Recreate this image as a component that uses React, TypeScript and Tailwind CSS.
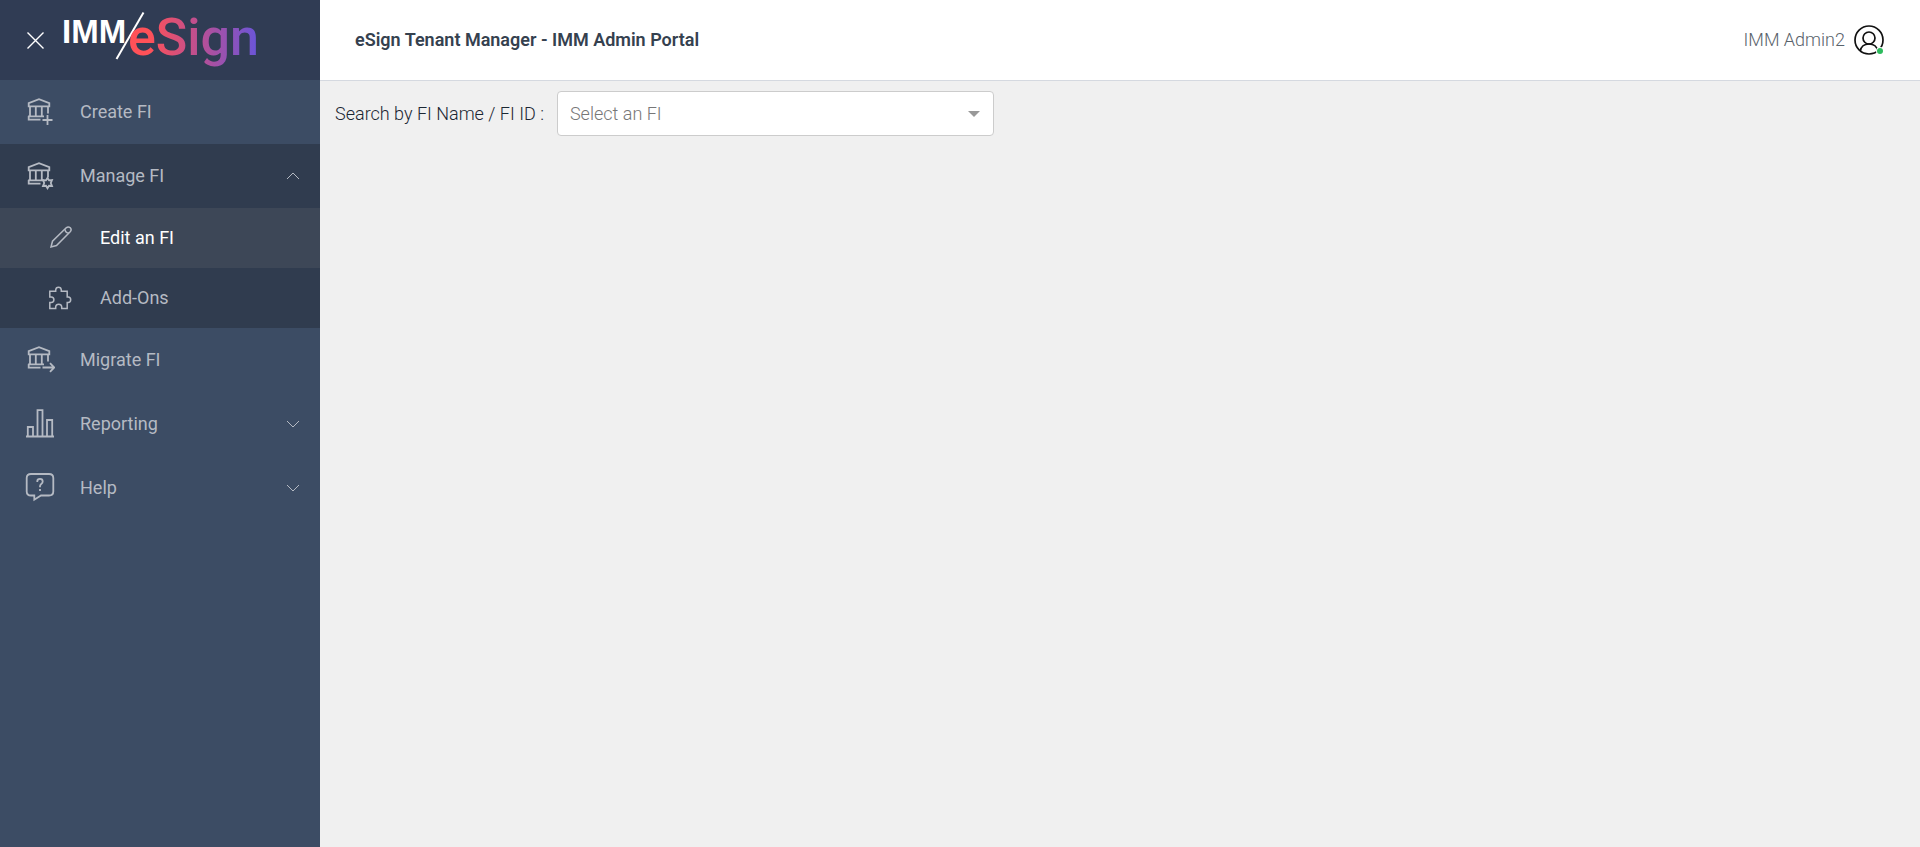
import type { ReactNode } from 'react';

const stroke = {
  fill: 'none',
  stroke: 'currentColor',
  strokeWidth: 1.8,
} as const;

function Bank({ children }: { children: ReactNode }) {
  return (
    <svg width="30" height="30" viewBox="0 0 30 30" {...stroke} aria-hidden="true">
      <path d="M3.7 9.3V6.2L14 2.2L24.3 6.2V9.3Z" />
      <path d="M5 10V19M10.8 10V19M16.8 10V19M23 10V16.5" />
      <path d="M3 19.3H19M3.7 19V22.7H15.5" />
      {children}
    </svg>
  );
}

function CreateIcon() {
  return (
    <Bank>
      <path d="M22.5 18V28M17.5 23H27.5" />
    </Bank>
  );
}

function ManageIcon() {
  return (
    <Bank>
      <path d="M22.5 17L24 19.3L27 19L25.8 22L27 25L24 24.8L22.5 27.3L21 24.8L18 25L19.2 22L18 19L21 19.3Z" />
    </Bank>
  );
}

function MigrateIcon() {
  return (
    <Bank>
      <path d="M17.5 22.5H29M25 18.2L29.2 22.5L25 26.8" />
    </Bank>
  );
}

function ReportingIcon() {
  return (
    <svg width="30" height="30" viewBox="0 0 30 30" {...stroke} aria-hidden="true">
      <path d="M1 27.5H29M2.8 27.5V18H8V27.5M12.5 27.5V1.2H17.5V27.5M22 27.5V11H27.2V27.5" />
    </svg>
  );
}

function HelpIcon() {
  return (
    <svg width="30" height="30" viewBox="0 0 30 30" {...stroke} aria-hidden="true">
      <path d="M6 1H24Q28.3 1 28.3 5V18.5Q28.3 22.5 24 22.5H16L9.3 26.7V22.5H6Q1.7 22.5 1.7 18.5V5Q1.7 1 6 1Z" />
      <path d="M12.3 9V8.3Q12.3 5.9 15 5.9Q17.7 5.9 17.7 8.4Q17.7 9.9 16.2 11Q15 11.9 15 13.6V14.2M15 16V18" />
    </svg>
  );
}

function PencilIcon() {
  return (
    <svg width="24" height="24" viewBox="0 0 24 24" {...stroke} strokeWidth="1.5" aria-hidden="true">
      <path d="M3 21L4.5 15.2L18.2 1.8Q20.3 .1 22.3 1.8Q24 3.8 22.2 5.8L8.5 19.5Z" />
      <path d="M17 3.2Q17.2 6.8 20.9 7.1" />
    </svg>
  );
}

function PuzzleIcon() {
  return (
    <svg width="24" height="24" viewBox="0 0 24 24" {...stroke} strokeWidth="1.5" aria-hidden="true">
      <path d="M1.8 5.3H7.7V4Q7.9 1.3 10.5 1.3Q13.1 1.3 13.3 4V5.3H19.2V11H20.2Q22.7 11.2 22.7 13.7Q22.7 16.2 20.2 16.4H19.2V22.6H13.7V20.7Q13.4 18.3 10.7 18.3Q8 18.3 7.7 20.7V22.6H1.8V16.4H3.2Q5.9 16.2 5.9 13.7Q5.9 11.2 3.2 11H1.8Z" />
    </svg>
  );
}

function Chevron({ open }: { open?: boolean }) {
  return (
    <svg width="14" height="8" viewBox="0 0 14 8" fill="none" stroke="currentColor" aria-hidden="true">
      <path d={open ? 'M1 7L7 1L13 7' : 'M1 1L7 7L13 1'} />
    </svg>
  );
}

function Logo() {
  return (
    <svg width="220" height="80" viewBox="0 0 220 80" role="img" aria-label="IMM eSign">
      <defs>
        <linearGradient id="brand" x1="76" x2="203" y1="0" y2="0" gradientUnits="userSpaceOnUse">
          <stop offset="0.15" stopColor="#ff5158" />
          <stop offset="0.55" stopColor="#b94f94" />
          <stop offset="1" stopColor="#6b55d8" />
        </linearGradient>
      </defs>
      <text x="8" y="43" fill="#fff" className="font-['Liberation_Sans',sans-serif] text-[33px] font-bold">IMM</text>
      <path d="M62.5 59L89.5 12.5" stroke="#fff" strokeWidth="2" />
      <text x="74" y="55" fill="url(#brand)" className="font-['Roboto',sans-serif] text-[52px] font-medium">eSign</text>
    </svg>
  );
}

function NavItem({ icon, label, open, expandable }: { icon: ReactNode; label: string; open?: boolean; expandable?: boolean }) {
  const className = `flex h-16 w-full items-center pl-[25px] pr-5 text-left ${open ? 'bg-[#303c4f]' : ''}`;
  const content = (
    <>
      {icon}
      <span className="ml-[25px] flex-1">{label}</span>
      {expandable && <Chevron open={open} />}
    </>
  );

  return expandable ? (
    <button type="button" aria-expanded={!!open} className={className}>{content}</button>
  ) : (
    <a href="#" className={className}>{content}</a>
  );
}

function SubItem({ icon, label, active }: { icon: ReactNode; label: string; active?: boolean }) {
  return (
    <a href="#" className={`flex h-15 items-center pl-12 ${active ? 'bg-[#3d4757]' : 'bg-[#303c4f]'}`}>
      {icon}
      <span className={`ml-7 ${active ? 'text-white' : ''}`}>{label}</span>
    </a>
  );
}

function Sidebar() {
  return (
    <aside className="w-80 shrink-0 bg-[#3c4c64] text-[#b5bac3]">
      <div className="flex h-20 items-center bg-[#303c54] pl-[27px]">
        <button type="button" aria-label="Close menu" className="mr-[10px] text-white">
          <svg width="17" height="17" viewBox="0 0 17 17" stroke="currentColor" strokeWidth="1.4" aria-hidden="true">
            <path d="M.5 .5L16.5 16.5M16.5 .5L.5 16.5" />
          </svg>
        </button>
        <Logo />
      </div>
      <nav>
        <NavItem icon={<CreateIcon />} label="Create FI" />
        <NavItem icon={<ManageIcon />} label="Manage FI" expandable open />
        <SubItem icon={<PencilIcon />} label="Edit an FI" active />
        <SubItem icon={<PuzzleIcon />} label="Add-Ons" />
        <NavItem icon={<MigrateIcon />} label="Migrate FI" />
        <NavItem icon={<ReportingIcon />} label="Reporting" expandable />
        <NavItem icon={<HelpIcon />} label="Help" expandable />
      </nav>
    </aside>
  );
}

function Header() {
  return (
    <header className="flex h-[81px] items-center justify-between border-b border-[#d5d9e0] bg-white pl-[35px] pr-9">
      <h1 className="font-semibold text-[#35414f]">eSign Tenant Manager - IMM Admin Portal</h1>
      <button type="button" className="flex items-center gap-[9px] font-light text-[#59626b]">
        IMM Admin2
        <svg width="30" height="30" viewBox="0 0 30 30" fill="none" stroke="#111" strokeWidth="1.7" aria-hidden="true">
          <circle cx="15" cy="15" r="14" />
          <circle cx="15" cy="13" r="6" />
          <path d="M6.3 26Q7.5 19 15 19Q22.5 19 23.7 26" />
          <circle cx="26" cy="26" r="4" fill="#fff" stroke="none" />
          <circle cx="26" cy="26" r="3" fill="#2dbb5d" stroke="none" />
        </svg>
      </button>
    </header>
  );
}

export default function App() {
  return (
    <div className="flex min-h-screen bg-[#f0f0f0] font-['Roboto',sans-serif] text-lg">
      <Sidebar />
      <div className="flex-1">
        <Header />
        <main className="flex items-center px-[15px] pt-[10px]">
          <label htmlFor="fi" className="font-light text-[#1b2733]">Search by FI Name / FI ID :</label>
          <div className="ml-[13px] grid w-[437px] items-center">
            <select
              id="fi"
              defaultValue=""
              className="col-start-1 row-start-1 h-[45px] appearance-none rounded border border-[#ccc] bg-white px-3 font-light text-[#777]"
            >
              <option value="">Select an FI</option>
            </select>
            <svg className="pointer-events-none col-start-1 row-start-1 mr-[14px] justify-self-end" width="12" height="6" viewBox="0 0 12 6" fill="#999" aria-hidden="true">
              <path d="M0 0H12L6 6Z" />
            </svg>
          </div>
        </main>
      </div>
    </div>
  );
}
